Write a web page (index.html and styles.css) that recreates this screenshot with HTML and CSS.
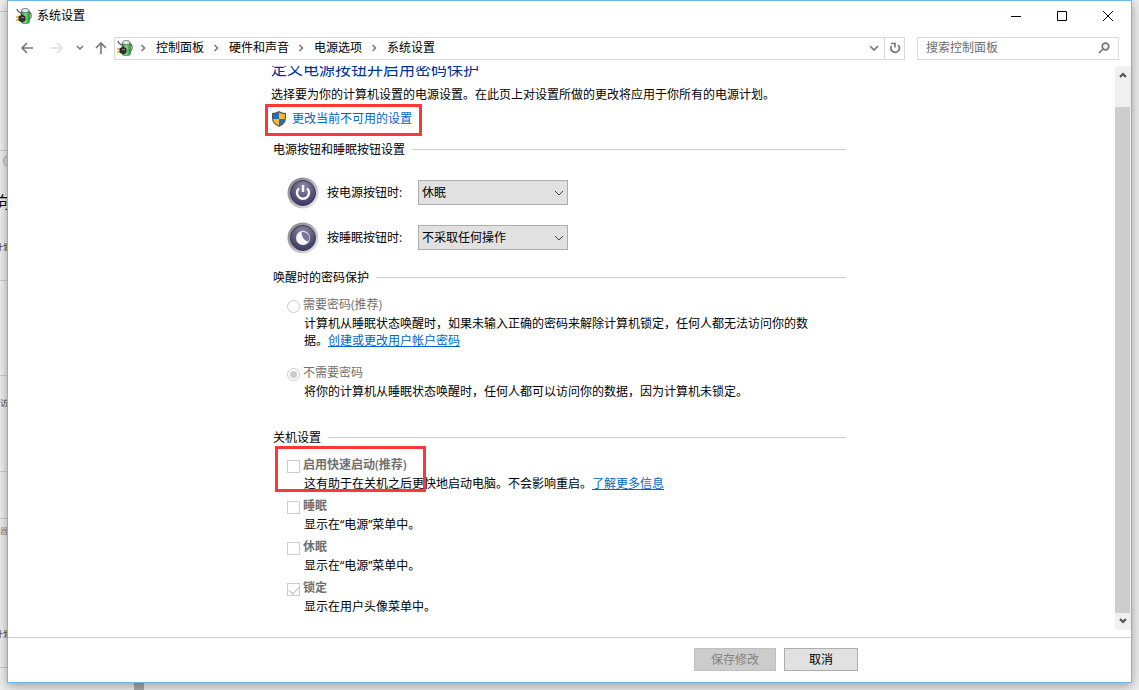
FILE: index.html
```html
<!DOCTYPE html>
<html lang="zh-CN">
<head>
<meta charset="utf-8">
<title>系统设置</title>
<link rel="stylesheet" href="styles.css">
</head>
<body>
<svg class="defs" aria-hidden="true">
  <defs>
    <linearGradient id="ring" x1="0" y1="0" x2="1" y2="1"><stop offset="0" stop-color="#777"/><stop offset=".5" stop-color="#b4b4b6"/><stop offset="1" stop-color="#f2f2f4"/></linearGradient>
    <radialGradient id="orb" cx=".5" cy=".25" r=".8"><stop offset="0" stop-color="#8d8da8"/><stop offset=".5" stop-color="#5c5b7e"/><stop offset="1" stop-color="#35345a"/></radialGradient>
    <linearGradient id="cell"><stop offset="0" stop-color="#1d8a2b"/><stop offset=".5" stop-color="#7fe088"/><stop offset="1" stop-color="#169a2a"/></linearGradient>
    <symbol id="plug" viewBox="0 0 16 16">
      <path d="M12 3q4 1.500 3 6l-2 3" fill="none" stroke="#666" stroke-width="1.200"/>
      <rect x="5" y="2" width="8.500" height="13.500" rx="2.500" fill="url(#cell)" stroke="#3c6b44" stroke-width=".6"/>
      <ellipse cx="9.200" cy="2.600" rx="3.800" ry="2.200" fill="#dfe8e8" stroke="#555" stroke-width=".7"/>
      <path d="M1 1q.5 3 4 4l2 3" fill="none" stroke="#555" stroke-width="1.200"/>
      <path d="M0 9h4M0 12h4" stroke="#e9a91c" stroke-width="1.500"/>
      <path d="M3 8.500 6 7.500l3 1v4l-3 1-3-1z" fill="#333" stroke="#222"/>
      <path d="m5 9.500 3 .2" stroke="#888"/>
    </symbol>
    <symbol id="crumb" viewBox="0 0 6 8"><path d="m1.500 1 3 3-3 3" fill="none" stroke="#777" stroke-width="1.500"/></symbol>
  </defs>
</svg>
<div class="backdrop" aria-hidden="true">
  <i class="rule r1"></i><i class="rule r2"></i><i class="rule r3"></i><i class="rule r4"></i><i class="rule r5"></i><i class="rule r6"></i><i class="rule r7"></i>
  <i class="knob"></i>
  <span class="big">向</span><span class="tiny t1">计划</span><span class="tiny t2">访</span><span class="tiny t3">器</span><span class="tiny t4">计划</span>
  <i class="post"></i>
</div>
<div class="window">
  <header class="titlebar">
    <svg class="app-icon" aria-hidden="true"><use href="#plug"/></svg>
    <h1>系统设置</h1>
    <div class="caption">
      <button aria-label="最小化"><svg viewBox="0 0 12 12"><path d="M1 6.500h10"/></svg></button>
      <button aria-label="最大化"><svg viewBox="0 0 12 12"><path d="M1.500 1.500h9v9h-9z"/></svg></button>
      <button aria-label="关闭"><svg viewBox="0 0 12 12"><path d="m1 1 10 10M11 1 1 11"/></svg></button>
    </div>
  </header>
  <nav class="toolbar">
    <div class="history">
      <button class="back" aria-label="后退"><svg class="arrow" viewBox="0 0 14 14"><path d="M13 7H2M7 2 2 7l5 5"/></svg></button>
      <button class="forward" aria-label="前进" disabled><svg class="arrow" viewBox="0 0 14 14"><path d="M1 7h11M7 2l5 5-5 5"/></svg></button>
      <button class="recent" aria-label="最近位置"><svg class="chev" viewBox="0 0 8 6"><path d="m1 1 3 3 3-3"/></svg></button>
      <button class="up" aria-label="向上"><svg class="arrow" viewBox="0 0 14 14"><path d="M7 13V2M2 7l5-5 5 5"/></svg></button>
    </div>
    <div class="address">
      <svg class="app-icon" aria-hidden="true"><use href="#plug"/></svg>
      <svg class="crumb"><use href="#crumb"/></svg><a href="#">控制面板</a>
      <svg class="crumb"><use href="#crumb"/></svg><a href="#">硬件和声音</a>
      <svg class="crumb"><use href="#crumb"/></svg><a href="#">电源选项</a>
      <svg class="crumb"><use href="#crumb"/></svg><a href="#">系统设置</a>
      <button class="drop" aria-label="以前的位置"><svg viewBox="0 0 10 7"><path d="m1 1 4 4 4-4"/></svg></button>
      <button class="reload" aria-label="刷新"><svg viewBox="0 0 12 12"><path d="M9 3a4.200 4.200 0 1 1-6.500 1M2 1.500h4v4"/></svg></button>
    </div>
    <div class="search">
      <input type="text" placeholder="搜索控制面板" aria-label="搜索控制面板">
      <svg viewBox="0 0 12 12" aria-hidden="true"><circle cx="7.500" cy="4.500" r="3.300"/><path d="M5 7 1 11"/></svg>
    </div>
  </nav>
  <div class="body">
    <main class="view">
      <div class="page">
        <h2>定义电源按钮并启用密码保护</h2>
        <p class="intro">选择要为你的计算机设置的电源设置。在此页上对设置所做的更改将应用于你所有的电源计划。</p>
        <div class="admin">
          <svg viewBox="0 0 14 16" aria-hidden="true"><path d="M7 0q3 2 7 2v5q0 6-7 9Q0 13 0 7V2q4 0 7-2z" fill="#555"/><path d="M7 1.500V8H1.200V3Q4.500 3 7 1.500zM7 8h5.800Q12.500 12 7 14.700z" fill="#1f6fc4"/><path d="M7 1.500Q9.500 3 12.800 3v5H7zM1.200 8H7v6.700Q1.500 12 1.200 8z" fill="#fbbd23"/></svg>
          <a href="#">更改当前不可用的设置</a>
          <span class="mark mark-link"></span>
        </div>

        <section>
          <h3>电源按钮和睡眠按钮设置</h3>
          <div class="action">
            <svg class="orb" viewBox="0 0 32 32" aria-hidden="true"><circle cx="16" cy="16" r="15.500" fill="url(#ring)"/><circle cx="16" cy="16" r="12.500" fill="url(#orb)" stroke="#3a395c"/><path d="M12 11.300a6 6 0 1 0 8 0M16 8v7" fill="none" stroke="#f5f5fa" stroke-width="2.400"/></svg>
            <label for="power">按电源按钮时:</label>
            <div class="pick"><select id="power"><option>休眠</option></select><svg viewBox="0 0 10 6" aria-hidden="true"><path d="m1 1 4 4 4-4"/></svg></div>
          </div>
          <div class="action">
            <svg class="orb" viewBox="0 0 32 32" aria-hidden="true"><circle cx="16" cy="16" r="15.500" fill="url(#ring)"/><circle cx="16" cy="16" r="12.500" fill="url(#orb)" stroke="#3a395c"/><circle cx="16" cy="16" r="7" fill="#f8f8fc"/><path d="M14.500 10.300a6 6 0 0 1 6.500 9.500q-6.500-2.500-6.500-9.500z" fill="#77769a"/></svg>
            <label for="sleep">按睡眠按钮时:</label>
            <div class="pick"><select id="sleep"><option>不采取任何操作</option></select><svg viewBox="0 0 10 6" aria-hidden="true"><path d="m1 1 4 4 4-4"/></svg></div>
          </div>
        </section>

        <section class="wake">
          <h3>唤醒时的密码保护</h3>
          <div class="choice">
            <input type="radio" name="wake" id="need" disabled><label for="need">需要密码(推荐)</label>
            <p>计算机从睡眠状态唤醒时，如果未输入正确的密码来解除计算机锁定，任何人都无法访问你的数据。<a href="#">创建或更改用户帐户密码</a></p>
          </div>
          <div class="choice">
            <input type="radio" name="wake" id="noneed" checked disabled><label for="noneed">不需要密码</label>
            <p>将你的计算机从睡眠状态唤醒时，任何人都可以访问你的数据，因为计算机未锁定。</p>
          </div>
        </section>

        <section class="shutdown">
          <h3>关机设置</h3>
          <div class="choice">
            <input type="checkbox" id="fast" disabled><label for="fast">启用快速启动(推荐)</label>
            <p>这有助于在关机之后更快地启动电脑。不会影响重启。<a href="#">了解更多信息</a></p>
            <span class="mark mark-fast"></span>
          </div>
          <div class="choice">
            <input type="checkbox" id="s" disabled><label for="s">睡眠</label>
            <p>显示在“电源”菜单中。</p>
          </div>
          <div class="choice">
            <input type="checkbox" id="h" disabled><label for="h">休眠</label>
            <p>显示在“电源”菜单中。</p>
          </div>
          <div class="choice">
            <input type="checkbox" id="l" checked disabled><label for="l">锁定</label>
            <p>显示在用户头像菜单中。</p>
          </div>
        </section>
      </div>
    </main>
    <div class="scrollbar" aria-hidden="true">
      <svg viewBox="0 0 8 6"><path d="m1 5 3-3 3 3"/></svg>
      <div class="thumb"></div>
      <svg viewBox="0 0 8 6"><path d="m1 1 3 3 3-3"/></svg>
    </div>
  </div>
  <footer>
    <div class="buttons">
      <button class="save" disabled>保存修改</button>
      <button class="cancel">取消</button>
    </div>
  </footer>
</div>
</body>
</html>
```
FILE: styles.css
```css
* { box-sizing: border-box; }

body {
  margin: 0;
  height: 100vh;
  padding: 0 7px 7px;
  background: #eee;
  color: #000;
  font: 12px/16px "Open Sans", "Noto Sans CJK SC", sans-serif;
  overflow: hidden;
}

h1, h2, h3, p { margin: 0; font-weight: 400; }
h1, h3 { font-size: 12px; }
button, input, select { font: inherit; color: inherit; margin: 0; }
button { padding: 0; border: 0; background: none; }
svg { display: block; flex: none; }
a { color: #0066cc; }
.defs { position: absolute; width: 0; height: 0; }

/* Page showing behind the window */
.backdrop { position: absolute; inset: 0; overflow: hidden; }
.backdrop > * { position: absolute; left: 0; }
.rule { width: 8px; height: 1px; background: #ccc; }
.r1 { top: 11px; }
.r2 { top: 150px; }
.r3 { top: 280px; }
.r4 { top: 375px; }
.r5 { top: 471px; }
.r6 { top: 518px; }
.r7 { top: 667px; }
.knob { top: 155px; width: 12px; height: 12px; margin-left: 3px; border: 1px solid #aaa; border-radius: 6px; background: #ddd; }
.big { top: 192px; margin-left: -5px; font-size: 16px; line-height: 20px; }
.tiny { font-size: 8px; line-height: 10px; color: #444; white-space: nowrap; }
.t1 { top: 242px; margin-left: -5px; }
.t2 { top: 398px; }
.t3 { top: 526px; color: #888; }
.t4 { top: 629px; margin-left: -5px; }
.backdrop .post { left: 134px; bottom: 0; width: 10px; height: 12px; background: #aaa; }

.window {
  position: relative;
  height: 100%;
  display: flex;
  flex-direction: column;
  background: #fff;
  border: 1px solid #6cb8ea;
  box-shadow: 0 3px 10px rgba(0, 0, 0, .35);
}

.titlebar { display: flex; align-items: center; height: 29px; padding-left: 8px; gap: 5px; flex: none; }
.app-icon { width: 16px; height: 16px; }
.caption { display: flex; margin-left: auto; }
.caption button { width: 46px; height: 29px; display: grid; place-items: center; }
.caption svg { width: 12px; height: 12px; fill: none; stroke: #000; }

.toolbar { display: flex; align-items: center; height: 36px; padding: 0 12px; flex: none; }
.history { display: flex; align-items: center; width: 94px; }
.history button { display: flex; }
.history .back { width: 30px; }
.history .forward { width: 26px; }
.history .recent { width: 18px; }
.arrow { width: 14px; height: 14px; fill: none; stroke: #777; stroke-width: 1.6px; }
:disabled .arrow { stroke: #ddd; }
.chev { width: 8px; height: 6px; fill: none; stroke: #777; stroke-width: 1.5px; }
.address { flex: 1; display: flex; align-items: center; height: 23px; padding-left: 2px; border: 1px solid #d9d9d9; }
.address a { color: #000; text-decoration: none; margin: 0 9px 0 10px; }
.crumb { width: 6px; height: 8px; }
.address .app-icon + .crumb { margin-left: 7px; }
.address button { height: 21px; display: grid; place-items: center; }
.address .drop { margin-left: auto; width: 20px; }
.address .reload { width: 20px; border-left: 1px solid #d9d9d9; }
.address button svg { width: 12px; height: 12px; fill: none; stroke: #777; stroke-width: 1.7px; }
.address .drop svg { width: 10px; height: 7px; }
.search { display: flex; align-items: center; width: 202px; height: 23px; margin-left: 12px; padding: 0 8px; border: 1px solid #d9d9d9; }
.search input { flex: 1; min-width: 0; padding: 0; border: 0; background: none; outline: 0; }
.search input::placeholder { color: #6d6d6d; }
.search svg { width: 12px; height: 12px; fill: none; stroke: #777; stroke-width: 1.7px; }

.body { flex: 1; min-height: 0; display: flex; margin-bottom: 7px; }
.view { flex: 1; overflow: hidden; }
.page { max-width: 581px; margin: -7px auto 0; padding-right: 6px; }
.page h2 { color: #003399; font-size: 16px; line-height: 20px; }
.intro { margin-top: 8px; }
.admin { position: relative; display: flex; align-items: center; gap: 6px; height: 16px; margin-top: 8px; padding-left: 1px; }
.admin svg { width: 14px; height: 16px; }
.admin a { text-decoration: none; }
.mark { position: absolute; border: 3px solid #fb3838; pointer-events: none; }
.mark-link { left: -6px; top: -7px; width: 157px; height: 32px; }
.mark-fast { left: -12px; top: -10px; width: 151px; height: 46px; }

section { margin-top: 14px; padding-left: 2px; }
h3 { display: flex; align-items: center; gap: 7px; line-height: 17px; }
h3::after { content: ""; flex: 1; height: 1px; background: #ccc; }
.action { display: flex; align-items: center; height: 45px; padding-left: 14px; gap: 8px; }
h3 + .action { margin-top: 12px; }
.orb { width: 32px; height: 32px; }
.action label { width: 83px; }
.pick { position: relative; }
.pick select { appearance: none; display: block; width: 150px; height: 25px; padding: 0 20px 0 3px; border: 1px solid #adadad; border-radius: 0; background: #e1e1e1; }
.pick svg { position: absolute; right: 4px; top: 10px; width: 10px; height: 6px; fill: none; stroke: #444; pointer-events: none; }

.wake { margin-top: 9px; }
.choice { position: relative; display: grid; grid-template-columns: 16px 1fr; align-items: center; margin: 1px 26px 0 14px; }
.choice label { color: #707070; line-height: 18px; }
.choice p { grid-column: 2; padding-left: 1px; line-height: 17px; margin-top: 1px; }
.choice input { appearance: none; width: 13px; height: 13px; margin-top: 3px; border: 1px solid #ccc; background: #fff; }
.choice input[type="radio"] { border-radius: 50%; display: grid; place-items: center; }
.choice input[type="radio"]:checked::before { content: ""; width: 7px; height: 7px; border-radius: 50%; background: #ccc; }
.choice input[type="checkbox"]:checked::before { content: ""; display: block; width: 9px; height: 5px; margin: 2px 1px; border: solid #bbb; border-width: 0 0 1px 1px; transform: rotate(-45deg); }
.wake h3 + .choice { margin-top: 10px; }
.wake .choice + .choice { margin-top: 15px; }
.shutdown { margin-top: 29px; }
.shutdown h3 + .choice { margin-top: 10px; }
.shutdown .choice + .choice { margin-top: 5px; }
.shutdown label { font-weight: 600; }

.scrollbar { width: 16px; display: flex; flex-direction: column; align-items: center; gap: 5px; padding: 6px 0; background: #f0f0f0; }
.scrollbar svg { width: 8px; height: 6px; fill: none; stroke: #505050; stroke-width: 2px; }
.thumb { flex: 1; width: 15px; margin-top: 24px; align-self: flex-start; background: #cdcdcd; }

footer { flex: none; height: 45px; border-top: 1px solid #ccc; }
.buttons { display: flex; justify-content: flex-end; gap: 8px; max-width: 577px; margin: 10px auto 0; }
.buttons button { height: 23px; border: 1px solid #adadad; background: #e1e1e1; }
.buttons .save { width: 82px; border-color: #bfbfbf; background: #ccc; color: #838383; }
.buttons .cancel { width: 74px; }
```
